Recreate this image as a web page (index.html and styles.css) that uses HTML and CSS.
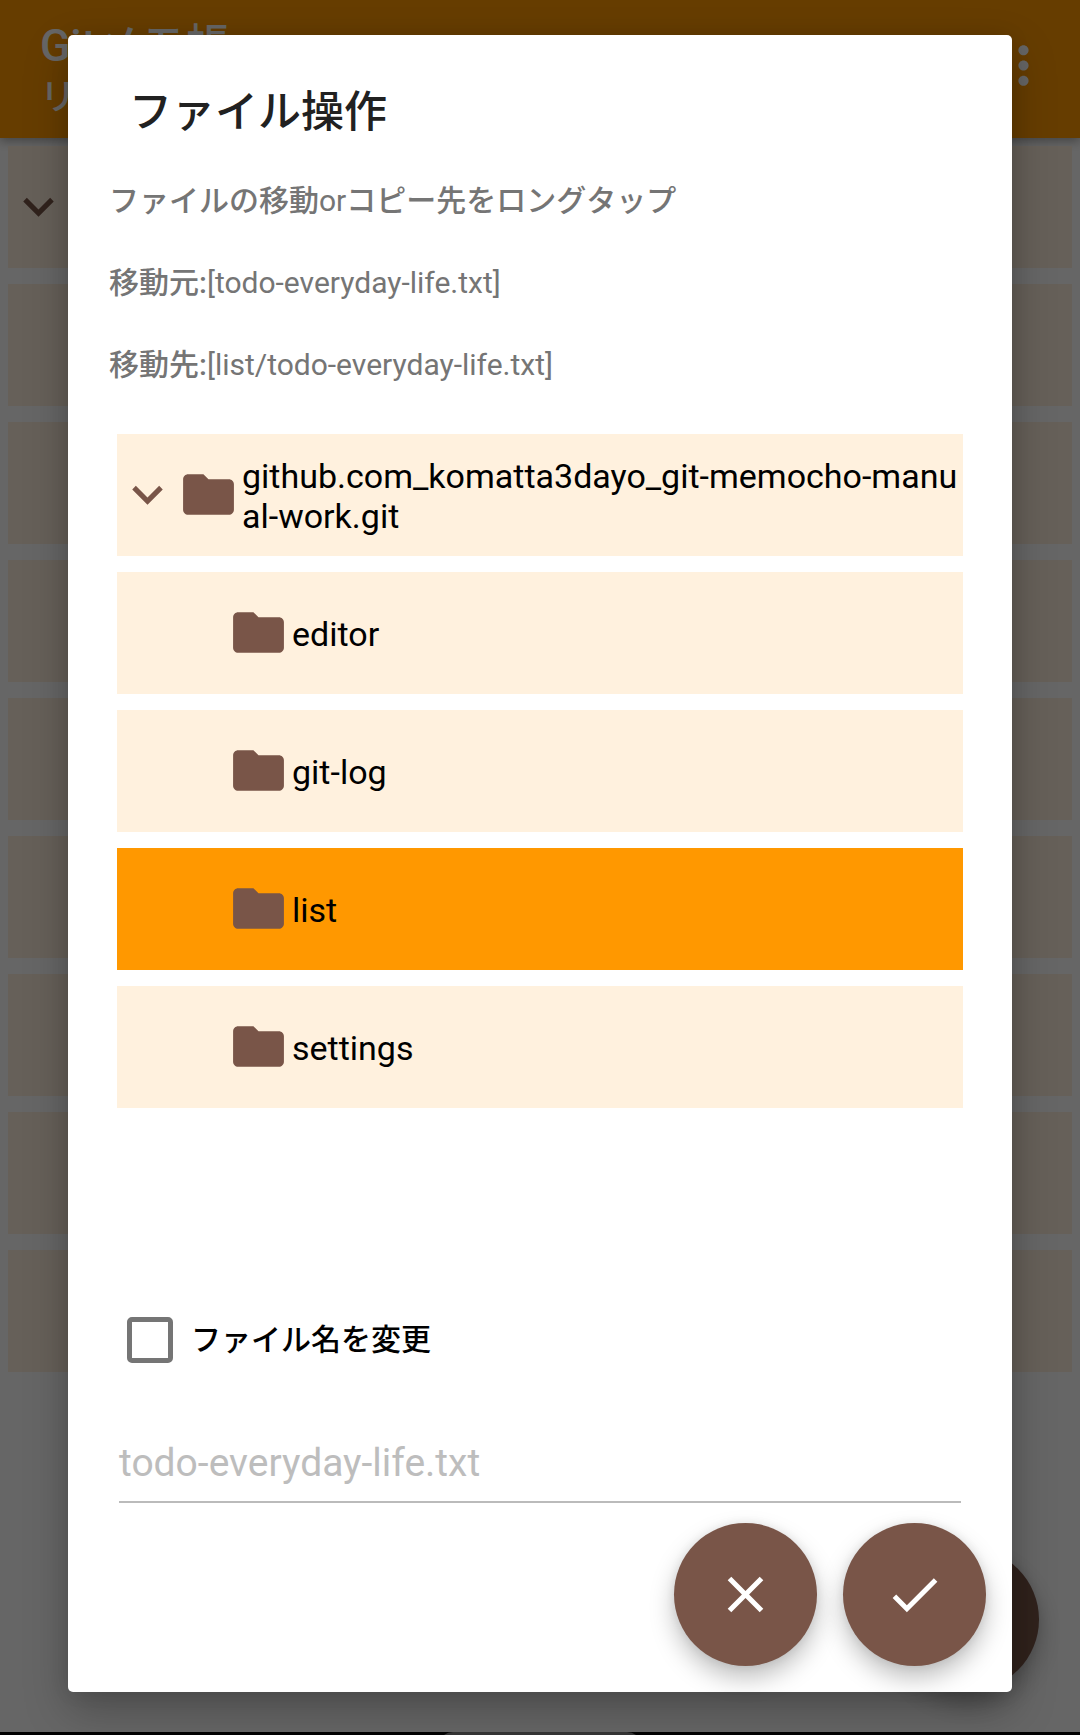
FILE: index.html
```html
<!DOCTYPE html>
<html lang="ja">
<head>
<meta charset="utf-8">
<title>Gitメモ帳</title>
<link rel="stylesheet" href="styles.css">
</head>
<body>
<svg class="symbols" aria-hidden="true">
  <symbol id="folder" viewBox="0 0 24 24"><path d="M10 4H4c-1.1 0-1.99.9-1.99 2L2 18c0 1.1.9 2 2 2h16c1.1 0 2-.9 2-2V8c0-1.1-.9-2-2-2h-8l-2-2z"/></symbol>
  <symbol id="chevron" viewBox="0 0 24 24"><path d="M7.41 8.59L12 13.17l4.59-4.58L18 10l-6 6-6-6 1.41-1.41z"/></symbol>
  <symbol id="close" viewBox="0 0 24 24"><path d="M19 6.41L17.59 5 12 10.59 6.41 5 5 6.41 10.59 12 5 17.59 6.41 19 12 13.41 17.59 19 19 17.59 13.41 12z"/></symbol>
  <symbol id="done" viewBox="0 0 24 24"><path d="M9 16.2L4.8 12l-1.4 1.4L9 19 21 7l-1.4-1.4L9 16.2z"/></symbol>
  <symbol id="more" viewBox="0 0 24 24"><path d="M12 8c1.1 0 2-.9 2-2s-.9-2-2-2-2 .9-2 2 .9 2 2 2zm0 2c-1.1 0-2 .9-2 2s.9 2 2 2 2-.9 2-2-.9-2-2-2zm0 6c-1.1 0-2 .9-2 2s.9 2 2 2 2-.9 2-2-.9-2-2-2z"/></symbol>
</svg>

<div class="app">
  <header class="app-bar">
    <div class="app-titles">
      <div class="app-title">Gitメモ帳</div>
      <div class="app-subtitle">リ</div>
    </div>
    <svg class="icon"><use href="#more"/></svg>
  </header>
  <main class="list">
    <div class="row"><svg class="icon"><use href="#chevron"/></svg></div>
    <div class="row"></div>
    <div class="row"></div>
    <div class="row"></div>
    <div class="row"></div>
    <div class="row"></div>
    <div class="row"></div>
    <div class="row"></div>
    <div class="row"></div>
  </main>
  <div class="fab app-fab"></div>
</div>

<div class="scrim">
  <section class="dialog">
    <h1 class="dialog-title">ファイル操作</h1>
    <div class="messages">
      <p><span class="ja">ファイルの移動</span>or<span class="ja">コピー先をロングタップ</span></p>
      <p><span class="ja">移動元:</span>[todo-everyday-life.txt]</p>
      <p><span class="ja">移動先:</span>[list/todo-everyday-life.txt]</p>
    </div>
    <div class="tree">
      <div class="row"><svg class="icon"><use href="#chevron"/></svg><svg class="icon"><use href="#folder"/></svg><span class="name">github.com_komatta3dayo_git-memocho-manu<br>al-work.git</span></div>
      <div class="row child"><svg class="icon"><use href="#folder"/></svg><span class="name">editor</span></div>
      <div class="row child"><svg class="icon"><use href="#folder"/></svg><span class="name">git-log</span></div>
      <div class="row child selected"><svg class="icon"><use href="#folder"/></svg><span class="name">list</span></div>
      <div class="row child"><svg class="icon"><use href="#folder"/></svg><span class="name">settings</span></div>
    </div>
    <div class="rename"><span class="checkbox"></span><span class="rename-label">ファイル名を変更</span></div>
    <div class="field"><span class="hint">todo-everyday-life.txt</span></div>
    <div class="actions">
      <div class="fab"><svg class="icon"><use href="#close"/></svg></div>
      <div class="fab"><svg class="icon"><use href="#done"/></svg></div>
    </div>
  </section>
</div>
<div class="nav-bar"><div class="nav-pill"></div></div>
</body>
</html>
```
FILE: styles.css
```css
* { box-sizing: border-box; }

body {
  margin: 0;
  width: 1080px;
  height: 1735px;
  overflow: hidden;
  font-family: Roboto, "Noto Sans CJK JP", sans-serif;
  color: #000;
  background: #fff;
}

.symbols { display: none; }

.icon {
  flex: none;
  width: 61px;
  height: 61px;
  fill: #795548;
}

/* Main screen */
.app { height: 1732px; }

.app-bar {
  display: flex;
  align-items: flex-start;
  justify-content: space-between;
  height: 138px;
  padding: 20px 26px 0 40px;
  background: #ff9800;
  color: #fff;
  box-shadow: 0 3px 10px rgba(0, 0, 0, .35);
}

.app-bar .icon { margin-top: 15px; fill: #fff; }

.app-title {
  height: 52px;
  font-size: 44.5px;
  line-height: 52px;
  font-weight: 500;
}

.app-subtitle {
  font-size: 36px;
  line-height: 52px;
  font-weight: 500;
}

.list {
  display: flex;
  flex-direction: column;
  gap: 16px;
  padding: 8px;
}

.row {
  display: flex;
  align-items: center;
  height: 122px;
  background: #fff1de;
}

.row .icon { margin-bottom: 1px; }

.fab {
  display: flex;
  align-items: center;
  justify-content: center;
  width: 143px;
  height: 143px;
  border-radius: 50%;
  background: #795548;
  box-shadow: 0 12px 24px rgba(0, 0, 0, .25), 0 0 10px rgba(0, 0, 0, .08);
}

.fab .icon { fill: #fff; }

.app-fab {
  position: absolute;
  left: 896px;
  top: 1548px;
}

/* Dialog */
.scrim {
  position: absolute;
  inset: 0 0 3px;
  padding: 35px 68px 40px;
  overflow: hidden;
  background: rgba(0, 0, 0, .6);
}

.dialog {
  display: flex;
  flex-direction: column;
  height: 1657px;
  padding: 46px 26px 26px 41px;
  border-radius: 5px;
  background: #fff;
  box-shadow: 0 18px 44px rgba(0, 0, 0, .26), 0 0 20px rgba(0, 0, 0, .08);
}

.dialog-title {
  margin: 0 0 0 20px;
  height: 62px;
  font-size: 43px;
  line-height: 62px;
  font-weight: 500;
  color: #212121;
}

.messages {
  margin-top: 17px;
  height: 274px;
  font-size: 30px;
  color: #757575;
}

.messages p {
  margin: 0;
  height: 82px;
  line-height: 82px;
  white-space: nowrap;
}

.messages .ja { font-weight: 500; }

.tree {
  display: flex;
  flex-direction: column;
  gap: 16px;
  width: 846px;
  margin-left: 8px;
}

.child { padding-left: 111px; }
.selected { background: #ff9800; }

.name {
  margin: 1px 0 0 3px;
  font-size: 34px;
  line-height: 40px;
  white-space: nowrap;
}

.rename {
  display: flex;
  align-items: center;
  gap: 18px;
  height: 46px;
  margin: 209px 0 0 18px;
}

.checkbox {
  width: 46px;
  height: 46px;
  border: 5px solid #757575;
  border-radius: 5px;
}

.rename-label {
  margin-bottom: 6px;
  font-size: 30px;
  font-weight: 500;
}

.field {
  width: 842px;
  height: 140px;
  margin-left: 10px;
  padding-top: 77px;
  border-bottom: 2px solid #bbb;
}

.hint {
  display: block;
  font-size: 39px;
  line-height: 47px;
  color: #bdbdbd;
}

.actions {
  display: flex;
  justify-content: flex-end;
  gap: 26px;
  margin-top: auto;
}

/* System navigation strip */
.nav-bar {
  position: absolute;
  inset: auto 0 0;
  display: flex;
  justify-content: center;
  height: 3px;
  overflow: hidden;
  background: #000;
}

.nav-pill {
  width: 204px;
  height: 30px;
  border-radius: 15px;
  background: #333;
}
```
